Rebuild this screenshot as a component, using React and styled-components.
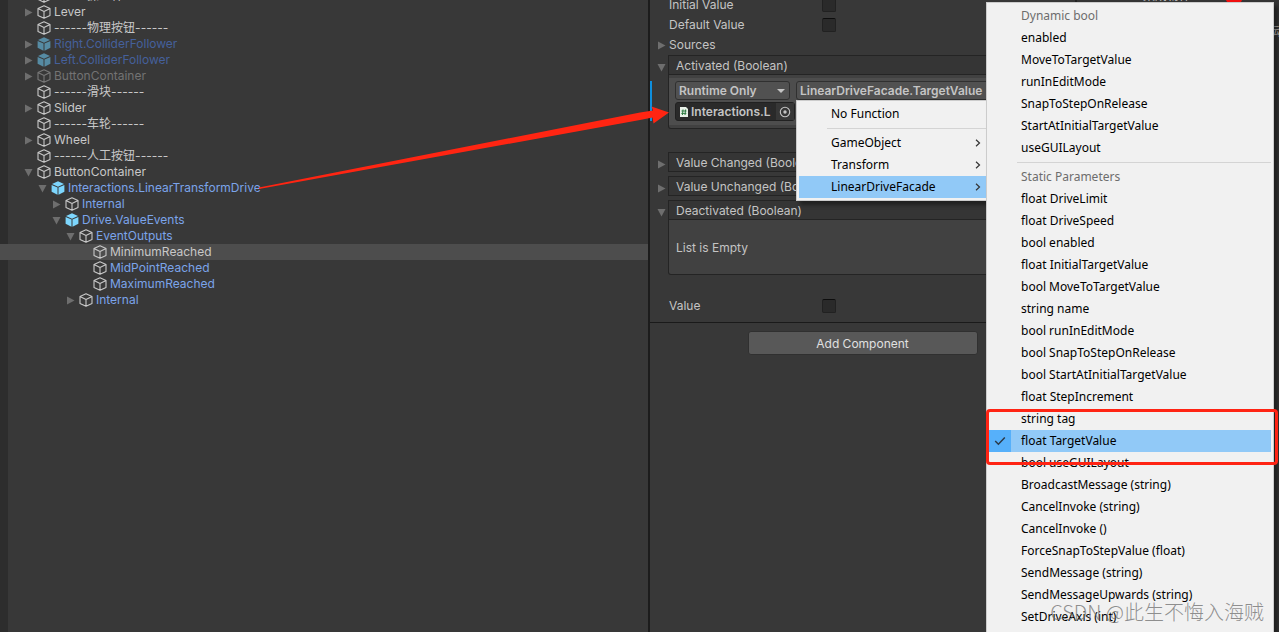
import React from "react";
import styled, { createGlobalStyle, css } from "styled-components";

const hierarchy = [
  { name: "------操纵杆------", level: 0 },
  { name: "Lever", level: 0, arrow: "closed" },
  { name: "------物理按钮------", level: 0 },
  { name: "Right.ColliderFollower", level: 0, arrow: "closed", icon: "dimPrefab", tone: "dimPrefab" },
  { name: "Left.ColliderFollower", level: 0, arrow: "closed", icon: "dimPrefab", tone: "dimPrefab" },
  { name: "ButtonContainer", level: 0, arrow: "closed", icon: "dim", tone: "dim" },
  { name: "------滑块------", level: 0 },
  { name: "Slider", level: 0, arrow: "closed" },
  { name: "------车轮------", level: 0 },
  { name: "Wheel", level: 0, arrow: "closed" },
  { name: "------人工按钮------", level: 0 },
  { name: "ButtonContainer", level: 0, arrow: "open" },
  { name: "Interactions.LinearTransformDrive", level: 1, arrow: "open", icon: "prefab", tone: "prefab" },
  { name: "Internal", level: 2, arrow: "closed", tone: "prefab" },
  { name: "Drive.ValueEvents", level: 2, arrow: "open", icon: "prefab", tone: "prefab" },
  { name: "EventOutputs", level: 3, arrow: "open", tone: "prefab" },
  { name: "MinimumReached", level: 4, selected: true },
  { name: "MidPointReached", level: 4, tone: "prefab" },
  { name: "MaximumReached", level: 4, tone: "prefab" },
  { name: "Internal", level: 3, arrow: "closed", tone: "prefab" }
];

const dynamicItems = [
  "enabled",
  "MoveToTargetValue",
  "runInEditMode",
  "SnapToStepOnRelease",
  "StartAtInitialTargetValue",
  "useGUILayout"
];

const staticItems = [
  "float DriveLimit",
  "float DriveSpeed",
  "bool enabled",
  "float InitialTargetValue",
  "bool MoveToTargetValue",
  "string name",
  "bool runInEditMode",
  "bool SnapToStepOnRelease",
  "bool StartAtInitialTargetValue",
  "float StepIncrement",
  "string tag",
  "float TargetValue",
  "bool useGUILayout",
  "BroadcastMessage (string)",
  "CancelInvoke (string)",
  "CancelInvoke ()",
  "ForceSnapToStepValue (float)",
  "SendMessage (string)",
  "SendMessageUpwards (string)",
  "SetDriveAxis (int)"
];

const textColors = {
  normal: "#c8c8c8",
  prefab: "#7ba4ea",
  dimPrefab: "#45609c",
  dim: "#737373"
};

const cubeColors = {
  normal: "#c8c8c8",
  prefab: "#7dd6fd",
  dimPrefab: "#568ba3",
  dim: "#787878"
};

function Cube({ kind = "normal" }) {
  const color = cubeColors[kind];
  const solid = kind === "prefab" || kind === "dimPrefab";
  return (
    <CubeSvg viewBox="0 0 14 14" aria-hidden="true">
      {solid ? (
        <>
          <path d="M7 .3 13 3 7 5.8 1 3z" fill={color} />
          <path d="M.6 3.9 6.5 6.6v7.1L.6 10.8z" fill={color} />
          <path d="M13.4 3.9 7.5 6.6v7.1l5.9-2.9z" fill={color} />
        </>
      ) : (
        <path
          d="M7 .8 13 3.6v6.8l-6 2.9-6-2.9V3.6zM1 3.6l6 3 6-3M7 6.6v6.7"
          fill="none"
          stroke={color}
          strokeWidth="1.1"
          strokeLinejoin="round"
        />
      )}
    </CubeSvg>
  );
}

function Arrow({ open }) {
  return (
    <ArrowSvg viewBox="0 0 9 9" aria-hidden="true">
      <path d={open ? "M.5 1h8L4.5 8.5z" : "M1 .5v8L8.5 4.5z"} fill="#6e6e6e" />
    </ArrowSvg>
  );
}

function Chevron() {
  return (
    <ChevronSvg viewBox="0 0 6 8" aria-hidden="true">
      <path d="M1 .8 4.5 4 1 7.2" fill="none" stroke="#333" strokeWidth="1.2" />
    </ChevronSvg>
  );
}

function EventHeader({ title, open }) {
  return (
    <Foldout>
      <Toggle aria-label={title} aria-expanded={!!open}>
        <Arrow open={open} />
      </Toggle>
      <HeaderBox>{title}</HeaderBox>
    </Foldout>
  );
}

function CheckRow({ id, label }) {
  return (
    <Property>
      <PropertyLabel htmlFor={id}>{label}</PropertyLabel>
      <Checkbox id={id} type="checkbox" />
    </Property>
  );
}

export default function App() {
  return (
    <Editor>
      <GlobalStyle />
      <Hierarchy>
        <Tree>
          {hierarchy.map((node, i) => (
            <TreeRow key={i} $level={node.level} $selected={node.selected}>
              {node.arrow ? (
                <Toggle aria-label={node.name} aria-expanded={node.arrow === "open"}>
                  <Arrow open={node.arrow === "open"} />
                </Toggle>
              ) : (
                <NoToggle />
              )}
              <Cube kind={node.icon} />
              <TreeName $tone={node.tone}>{node.name}</TreeName>
            </TreeRow>
          ))}
        </Tree>
      </Hierarchy>

      <Inspector>
        <Properties>
          <CheckRow id="initial" label="Initial Value" />
          <CheckRow id="default" label="Default Value" />
          <Sources>
            <Toggle aria-label="Sources" aria-expanded={false}>
              <Arrow />
            </Toggle>
            Sources
          </Sources>
          <EventHeader title="Activated (Boolean)" open />
          <Listener>
            <ChangedMark />
            <ListenerBox>
              <Target>
                <SelectWrap>
                  <CallState aria-label="Call state" defaultValue="runtime">
                    <option value="runtime">Runtime Only</option>
                    <option value="off">Off</option>
                  </CallState>
                  <SelectCaret />
                </SelectWrap>
                <ObjectField>
                  <ScriptIcon viewBox="0 0 10 12" aria-hidden="true">
                    <path d="M1 1h6l2 2v8H1z" fill="#e8f1e8" />
                    <path
                      d="M4 3.5 3.4 9M6.6 3.5 6 9M2.5 5h5M2.3 7.4h5"
                      stroke="#2f7d43"
                      strokeWidth="1"
                      fill="none"
                    />
                  </ScriptIcon>
                  <ObjectName>Interactions.LinearTransformDrive</ObjectName>
                  <Picker aria-label="Pick object">
                    <PickerSvg viewBox="0 0 12 12">
                      <circle cx="6" cy="6" r="4.7" fill="none" stroke="#c4c4c4" strokeWidth="1.1" />
                      <circle cx="6" cy="6" r="1.7" fill="#c4c4c4" />
                    </PickerSvg>
                  </Picker>
                </ObjectField>
              </Target>
              <FunctionButton>LinearDriveFacade.TargetValue</FunctionButton>
            </ListenerBox>
          </Listener>
          <Collapsed>
            <EventHeader title="Value Changed (Boolean)" />
            <EventHeader title="Value Unchanged (Boolean)" />
            <EventHeader title="Deactivated (Boolean)" open />
          </Collapsed>
          <EmptyList>List is Empty</EmptyList>
          <CheckRow id="value" label="Value" />
        </Properties>
        <Footer>
          <AddComponent>Add Component</AddComponent>
        </Footer>

        <FunctionMenu>
          <MenuItem>No Function</MenuItem>
          <MenuRule />
          <MenuItem>
            GameObject
            <Chevron />
          </MenuItem>
          <MenuItem>
            Transform
            <Chevron />
          </MenuItem>
          <MenuItem $active>
            LinearDriveFacade
            <Chevron />
          </MenuItem>
        </FunctionMenu>

        <MemberMenu>
          <MenuCaption>Dynamic bool</MenuCaption>
          {dynamicItems.map(item => (
            <MenuItem key={item}>{item}</MenuItem>
          ))}
          <MenuRule />
          <MenuCaption>Static Parameters</MenuCaption>
          {staticItems.map(item =>
            item === "float TargetValue" ? (
              <MenuItem key={item} $active $checked>
                <CheckCell>
                  <CheckSvg viewBox="0 0 12 10" aria-hidden="true">
                    <path d="M1.2 5 4.4 8.2 10.8 1.6" fill="none" stroke="#2b3a48" strokeWidth="1.5" />
                  </CheckSvg>
                </CheckCell>
                {item}
              </MenuItem>
            ) : (
              <MenuItem key={item}>{item}</MenuItem>
            )
          )}
          <Highlight />
        </MemberMenu>
      </Inspector>

      <Project>
        <ProjectTop>
          <span>SSI 集成物体</span>
          <RedDot />
        </ProjectTop>
        <ProjectLabel>动</ProjectLabel>
      </Project>

      <Pointer viewBox="0 0 412 84" aria-hidden="true">
        <path d="M0 79.5 381 4.5 394 2.5 392.5-1.5 410 4.5 394.5 15.5 393.5 9.5 381 12 0 81z" fill="#ff2512" />
      </Pointer>
      <Watermark>CSDN @此生不悔入海贼</Watermark>
    </Editor>
  );
}

const GlobalStyle = createGlobalStyle`
  body {
    margin: 0;
    background: #383838;
  }

  * {
    box-sizing: border-box;
  }

  button,
  select {
    font: inherit;
    color: inherit;
  }
`;

const Editor = styled.div`
  position: relative;
  display: grid;
  grid-template-columns: 648fr 427fr 204fr;
  height: 100vh;
  overflow: hidden;
  background: #383838;
  color: #c4c4c4;
  font-family: Inter, "Noto Sans CJK SC", sans-serif;
  font-size: 12px;
`;

const Hierarchy = styled.section`
  min-width: 0;
  background: linear-gradient(to right, #2d2d2d 8px, #383838 8px);
`;

const Tree = styled.ul`
  margin: -12px 0 0;
  padding: 0;
  list-style: none;
`;

const TreeRow = styled.li`
  display: flex;
  align-items: center;
  height: 16px;
  padding-left: ${props => 24 + props.$level * 14}px;
  background: ${props => (props.$selected ? "#4d4d4d" : "transparent")};
`;

const Toggle = styled.button`
  display: flex;
  flex: none;
  align-items: center;
  width: 12px;
  height: 16px;
  padding: 0;
  border: 0;
  background: none;
`;

const NoToggle = styled.span`
  width: 12px;
`;

const ArrowSvg = styled.svg`
  width: 9px;
  height: 9px;
`;

const CubeSvg = styled.svg`
  flex: none;
  width: 14px;
  height: 14px;
  margin: 0 3px 0 1px;
`;

const TreeName = styled.span`
  color: ${props => textColors[props.$tone || "normal"]};
  font-size: 12px;
  line-height: 16px;
  white-space: nowrap;
`;

const Inspector = styled.section`
  position: relative;
  min-width: 0;
  border-left: 2px solid #1c1c1c;
`;

const Properties = styled.div`
  margin-top: -5px;
  padding-bottom: 6px;
  border-bottom: 1px solid #1a1a1a;
`;

const Property = styled.div`
  display: grid;
  grid-template-columns: 153px 1fr;
  align-items: center;
  height: 20px;
  padding-left: 19px;
`;

const PropertyLabel = styled.label`
  line-height: 20px;
`;

const Checkbox = styled.input`
  appearance: none;
  width: 14px;
  height: 14px;
  margin: 0 0 1px;
  background: #2a2a2a;
  border: 1px solid #212121;
  border-top-color: #0d0d0d;
  border-radius: 2px;
`;

const Sources = styled.div`
  display: flex;
  align-items: center;
  height: 20px;
  padding-left: 7px;
  line-height: 18px;
`;

const Foldout = styled.div`
  display: flex;
  align-items: center;
  height: 20px;
  padding-left: 7px;

  ${Toggle} {
    padding-top: 4px;
  }
`;

const HeaderBox = styled.h3`
  flex: 1;
  height: 20px;
  margin: 0 0 0 -1px;
  padding-left: 7px;
  border: 1px solid #242424;
  background: #353535;
  font-size: 12px;
  font-weight: 400;
  line-height: 20px;
`;

const Listener = styled.div`
  display: flex;
  height: 54px;
`;

const ChangedMark = styled.span`
  width: 2px;
  height: 40px;
  margin: 6px 16px 0 0;
  background: #0f8fdd;
`;

const ListenerBox = styled.div`
  display: flex;
  flex: 1;
  align-items: flex-start;
  gap: 1px;
  min-width: 0;
  padding: 6px 7px 6px 6px;
  border: 1px solid #242424;
  border-top: 0;
  border-radius: 0 0 3px 3px;
  background: linear-gradient(#414141 3px, #4d4d4d 3px, #4d4d4d 50px, #414141 50px);
`;

const Target = styled.div`
  display: grid;
  gap: 2px;
  width: 120px;
  flex: none;
`;

const control = css`
  height: 19px;
  border: 1px solid #303030;
  border-radius: 3px;
  background: #515151;
  font-weight: 600;
  line-height: 16px;
`;

const SelectWrap = styled.div`
  display: grid;
  align-items: center;
  width: 115px;
`;

const CallState = styled.select`
  ${control}
  grid-area: 1 / 1;
  appearance: none;
  padding: 0 3px;
`;

const SelectCaret = styled.span`
  grid-area: 1 / 1;
  justify-self: end;
  margin-right: 5px;
  border: 4px solid transparent;
  border-top-color: #c4c4c4;
  border-bottom: 0;
  pointer-events: none;
`;

const ObjectField = styled.div`
  ${control}
  display: flex;
  align-items: center;
  min-width: 0;
  padding-left: 3px;
  background: #2a2a2a;
  border-color: #212121;
`;

const ScriptIcon = styled.svg`
  flex: none;
  width: 10px;
  height: 12px;
  margin-right: 2px;
`;

const ObjectName = styled.span`
  flex: 1;
  min-width: 0;
  overflow: hidden;
  white-space: nowrap;
`;

const Picker = styled.button`
  display: grid;
  flex: none;
  place-items: center;
  width: 18px;
  height: 17px;
  margin-left: 5px;
  padding: 0;
  border: 0;
  background: #373737;
`;

const PickerSvg = styled.svg`
  width: 12px;
  height: 12px;
`;

const FunctionButton = styled.button`
  ${control}
  flex: 1;
  padding: 0 3px;
  text-align: left;
  white-space: nowrap;
`;

const Collapsed = styled.div`
  display: grid;
  gap: 4px;
  margin-top: 23px;
`;

const EmptyList = styled.div`
  height: 55px;
  margin: 0 0 21px 18px;
  padding-left: 7px;
  border: 1px solid #242424;
  border-top: 0;
  border-radius: 0 0 3px 3px;
  background: #414141;
  line-height: 56px;
`;

const Footer = styled.div`
  display: flex;
  justify-content: center;
  padding-top: 8px;
`;

const AddComponent = styled.button`
  width: 230px;
  height: 24px;
  padding: 0;
  border: 1px solid #303030;
  border-radius: 3px;
  background: #585858;
  color: #e0e0e0;
`;

const menu = css`
  position: absolute;
  border: 1px solid #ccc;
  background: #f1f1f1;
  color: #000;
  font-family: "Noto Sans", "Open Sans", sans-serif;
  box-shadow: 4px 4px 4px rgba(0, 0, 0, 0.4);
`;

const FunctionMenu = styled.div`
  ${menu}
  top: 100px;
  left: 146px;
  width: 191px;
  padding: 2px 0 2px 2px;
`;

const MemberMenu = styled.div`
  ${menu}
  top: 2px;
  bottom: -24px;
  left: 336px;
  width: 288px;
  padding: 2px;
`;

const MenuItem = styled.button`
  display: flex;
  align-items: center;
  justify-content: ${props => (props.$checked ? "flex-start" : "space-between")};
  width: 100%;
  height: 22px;
  padding: 0 5px 0 ${props => (props.$checked ? 0 : 32)}px;
  border: 0;
  background: ${props => (props.$active ? "#91c9f7" : "transparent")};
  font-size: 12px;
  line-height: 22px;
  white-space: nowrap;
`;

const MenuCaption = styled.div`
  height: 22px;
  padding-left: 32px;
  color: #6d6d6d;
  font-size: 12px;
  line-height: 22px;
`;

const MenuRule = styled.hr`
  height: 1px;
  margin: 3px 0 3px 28px;
  border: 0;
  background: #d4d4d4;
`;

const ChevronSvg = styled.svg`
  width: 6px;
  height: 8px;
`;

const CheckCell = styled.span`
  display: grid;
  place-items: center;
  width: 22px;
  height: 22px;
  margin-right: 10px;
  background: #56b0fa;
`;

const CheckSvg = styled.svg`
  width: 12px;
  height: 10px;
`;

const Highlight = styled.div`
  position: absolute;
  top: 406px;
  left: -1px;
  right: -5px;
  height: 56px;
  border: 3px solid #ff2414;
  border-radius: 4px;
`;

const Project = styled.section`
  min-width: 0;
  border-left: 2px solid #242424;
  background: #353535;
`;

const ProjectTop = styled.div`
  display: flex;
  gap: 34px;
  height: 18px;
  margin-top: -13px;
  padding-left: 44px;
  line-height: 18px;
  white-space: nowrap;
`;

const RedDot = styled.span`
  width: 18px;
  height: 18px;
  border-radius: 9px;
  background: #f01010;
`;

const ProjectLabel = styled.div`
  margin-top: 18px;
  padding-left: 196px;
  line-height: 18px;
`;

const Pointer = styled.svg`
  position: absolute;
  top: 108px;
  left: 259px;
  width: 412px;
  height: 84px;
  overflow: visible;
  pointer-events: none;
`;

const Watermark = styled.div`
  position: absolute;
  right: 15px;
  bottom: 5px;
  color: rgba(110, 110, 110, 0.75);
  font-family: "Noto Sans CJK SC", sans-serif;
  font-size: 20px;
  font-weight: 300;
  line-height: 30px;
  white-space: nowrap;
`;
